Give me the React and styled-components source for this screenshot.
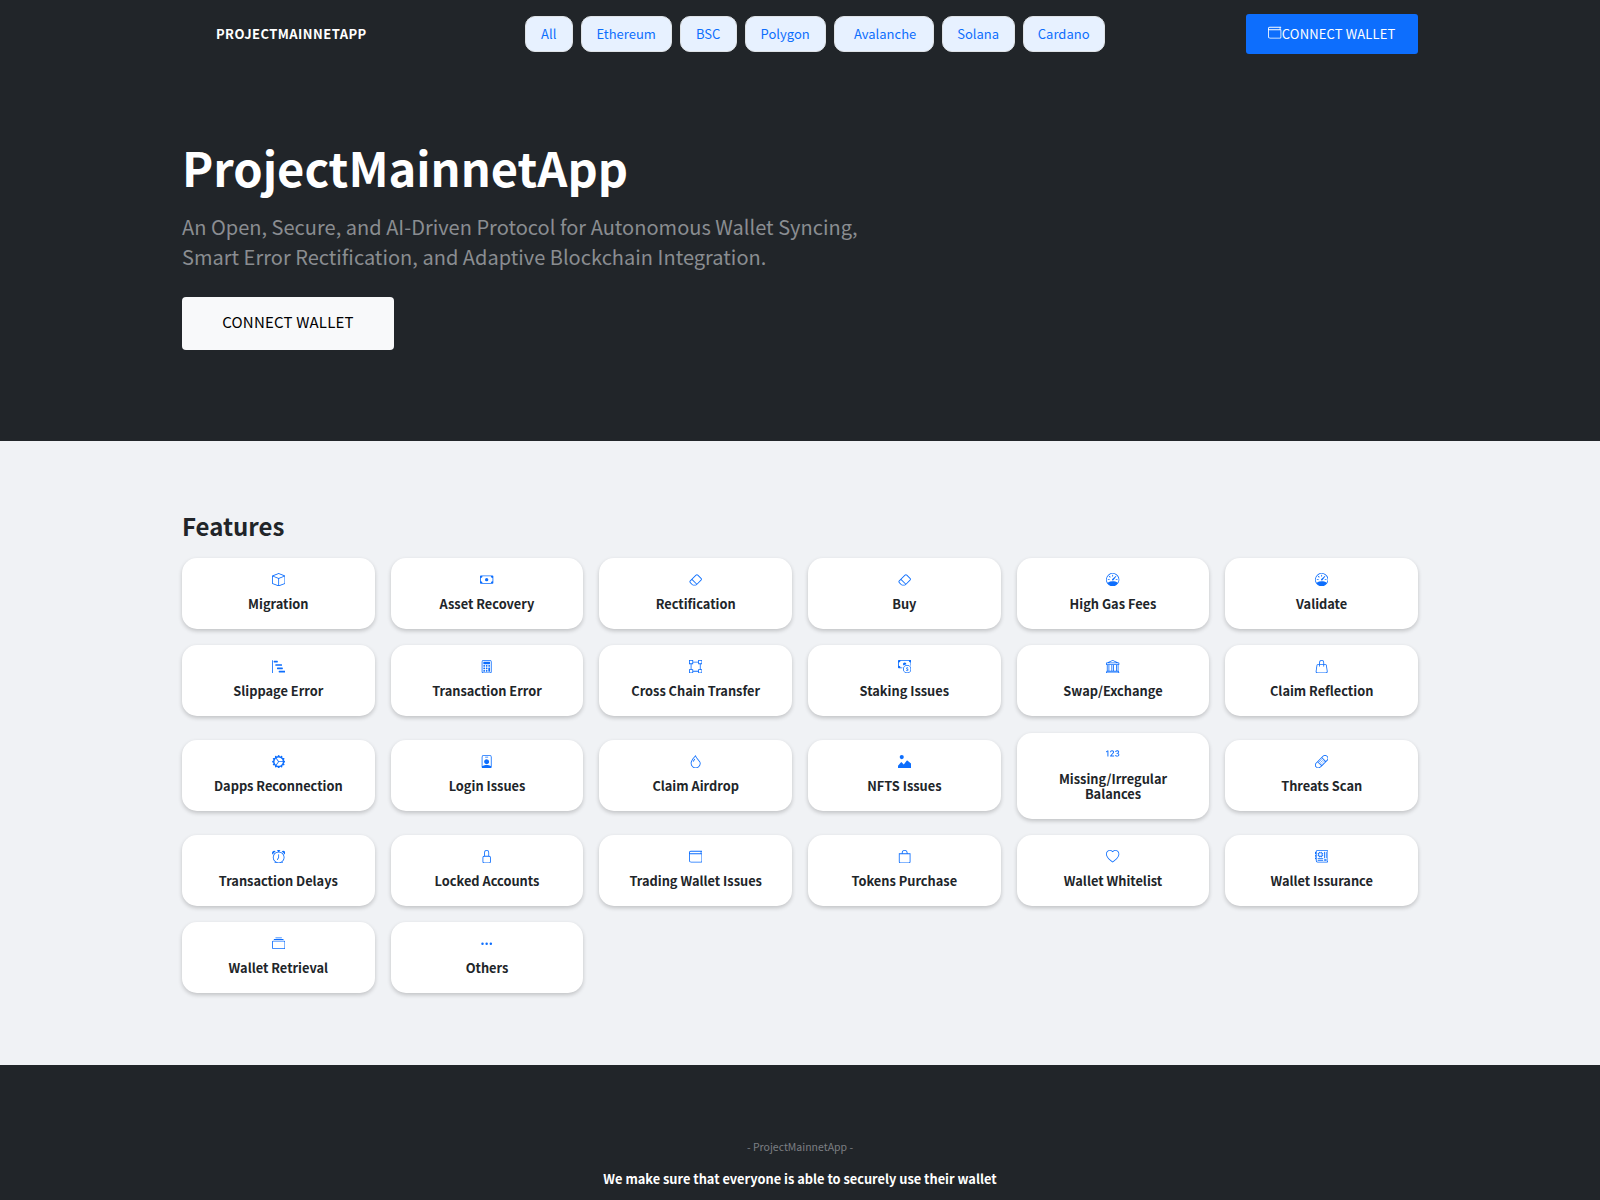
import React from 'react'
import styled, { createGlobalStyle } from 'styled-components'
import {
  BsBox, BsCash, BsEraser, BsSpeedometer, BsBarChartSteps, BsCalculator, BsBoundingBox, BsCashCoin,
  BsBank, BsHandbag, BsGearWideConnected, BsPersonBadge, BsDroplet, BsImageAlt, Bs123, BsBandaid,
  BsAlarm, BsLock, BsWallet, BsBag, BsHeart, BsMotherboard, BsCollection, BsThreeDots,
} from 'react-icons/bs'

const GlobalStyle = createGlobalStyle`
  * { box-sizing: border-box; }
  body {
    margin: 0;
    background: #212529;
    font-family: "Noto Sans CJK SC", "Noto Sans", sans-serif;
    color: #212529;
  }
`

const chains = [
  ['All', 48],
  ['Ethereum', 91],
  ['BSC', 57],
  ['Polygon', 81],
  ['\u00a0Avalanche', 100],
  ['Solana', 73],
  ['Cardano', 82],
]

const features = [
  ['Migration', BsBox],
  ['Asset Recovery', BsCash],
  ['Rectification', BsEraser],
  ['Buy', BsEraser],
  ['High Gas Fees', BsSpeedometer],
  ['Validate', BsSpeedometer],
  ['Slippage Error', BsBarChartSteps],
  ['Transaction Error', BsCalculator],
  ['Cross Chain Transfer', BsBoundingBox],
  ['Staking Issues', BsCashCoin],
  ['Swap/Exchange', BsBank],
  ['Claim Reflection', BsHandbag],
  ['Dapps Reconnection', BsGearWideConnected],
  ['Login Issues', BsPersonBadge],
  ['Claim Airdrop', BsDroplet],
  ['NFTS Issues', BsImageAlt],
  ['Missing/Irregular Balances', Bs123],
  ['Threats Scan', BsBandaid],
  ['Transaction Delays', BsAlarm],
  ['Locked Accounts', BsLock],
  ['Trading Wallet Issues', BsWallet],
  ['Tokens Purchase', BsBag],
  ['Wallet Whitelist', BsHeart],
  ['Wallet Issurance', BsMotherboard],
  ['Wallet Retrieval', BsCollection],
  ['Others', BsThreeDots],
]

const App = () => {
  return (
    <>
      <GlobalStyle />
      <Dark>
        <Nav>
          <Brand>PROJECTMAINNETAPP</Brand>
          <Pills>
            {chains.map(([name, width]) => (
              <Pill key={name} $width={width}>{name}</Pill>
            ))}
          </Pills>
          <NavButton>
            <BsWallet size={13.33} />
            CONNECT WALLET
          </NavButton>
        </Nav>
        <Hero>
          <Title>ProjectMainnetApp</Title>
          <Lead>
            An Open, Secure, and AI-Driven Protocol for Autonomous Wallet Syncing,
            <br />
            Smart Error Rectification, and Adaptive Blockchain Integration.
          </Lead>
          <HeroButton>CONNECT WALLET</HeroButton>
        </Hero>
      </Dark>
      <Features>
        <Heading>Features</Heading>
        <Grid>
          {features.map(([name, Icon]) => (
            <Card key={name}>
              <IconBox>
                <Icon size={13.33} />
              </IconBox>
              <CardName>{name}</CardName>
            </Card>
          ))}
        </Grid>
      </Features>
      <Footer>
        <FooterTag>- ProjectMainnetApp -</FooterTag>
        <FooterText>We make sure that everyone is able to securely use their wallet</FooterText>
      </Footer>
    </>
  )
}

export default App

const Dark = styled.div`
  background: #212529;
  height: 441px;
`

const Nav = styled.nav`
  width: 1236px;
  height: 68px;
  margin: 0 auto;
  display: flex;
  align-items: center;
`

const Brand = styled.div`
  margin-left: 34px;
  padding-bottom: 2px;
  font-size: 13px;
  font-weight: 700;
  letter-spacing: 0.45px;
  color: #fff;
`

const Pills = styled.div`
  margin-left: 158px;
  display: flex;
  gap: 8px;
`

const Pill = styled.button`
  width: ${p => p.$width}px;
  height: 36px;
  padding: 0 0 2px;
  border: 1px solid #dee2e6;
  border-radius: 10px;
  background: #e7f1ff;
  color: #0d6efd;
  font: inherit;
  font-size: 13px;
`

const NavButton = styled.button`
  margin-left: auto;
  width: 172px;
  height: 40px;
  padding: 0 0 2px;
  border: 0;
  border-radius: 3px;
  background: #0d6efd;
  color: #fff;
  font: inherit;
  font-size: 13px;
  letter-spacing: 0.15px;
  display: flex;
  align-items: center;
  justify-content: center;
`

const Hero = styled.header`
  width: 1236px;
  margin: 0 auto;
  padding-top: 70px;
`

const Title = styled.h1`
  margin: 0;
  font-size: 47px;
  font-weight: 700;
  line-height: 58px;
  color: #fff;
`

const Lead = styled.p`
  margin: 16px 0 0;
  font-size: 20px;
  line-height: 30px;
  letter-spacing: 0.02px;
  color: #8a8d91;
`

const HeroButton = styled.button`
  display: block;
  margin-top: 25px;
  width: 212px;
  height: 53px;
  padding: 0 0 4px;
  border: 0;
  border-radius: 4px;
  background: #f8f9fa;
  color: #000;
  font: inherit;
  font-size: 15px;
  letter-spacing: 0.2px;
`

const Features = styled.section`
  background: #f0f2f5;
  height: 624px;
  padding: 68px 182px 0;
`

const Heading = styled.h2`
  margin: 0 0 15px;
  font-size: 24px;
  font-weight: 700;
  line-height: 34px;
  color: #212529;
`

const Grid = styled.div`
  display: grid;
  grid-template-columns: repeat(6, 1fr);
  grid-template-rows: 71px 71px 87px 71px 71px;
  gap: 16px;
  align-items: center;
`

const Card = styled.div`
  padding: 13px 16px 18px;
  border-radius: 15px;
  background: #fff;
  box-shadow: 0 2px 4px rgba(0, 0, 0, 0.2);
  color: #0d6efd;
  display: flex;
  flex-direction: column;
  align-items: center;
  text-align: center;
  gap: 8px;
`

const IconBox = styled.span`
  height: 17px;
  display: flex;
  align-items: center;
`

const CardName = styled.div`
  font-size: 12.8px;
  font-weight: 700;
  line-height: 15px;
  color: #212529;
`

const Footer = styled.footer`
  background: #212529;
  padding-top: 74px;
  padding-bottom: 100px;
  text-align: center;
`

const FooterTag = styled.div`
  font-size: 10.5px;
  line-height: 16px;
  color: #7c7f83;
`

const FooterText = styled.div`
  margin-top: 15px;
  font-size: 12.8px;
  font-weight: 700;
  line-height: 18px;
  color: #fff;
`
